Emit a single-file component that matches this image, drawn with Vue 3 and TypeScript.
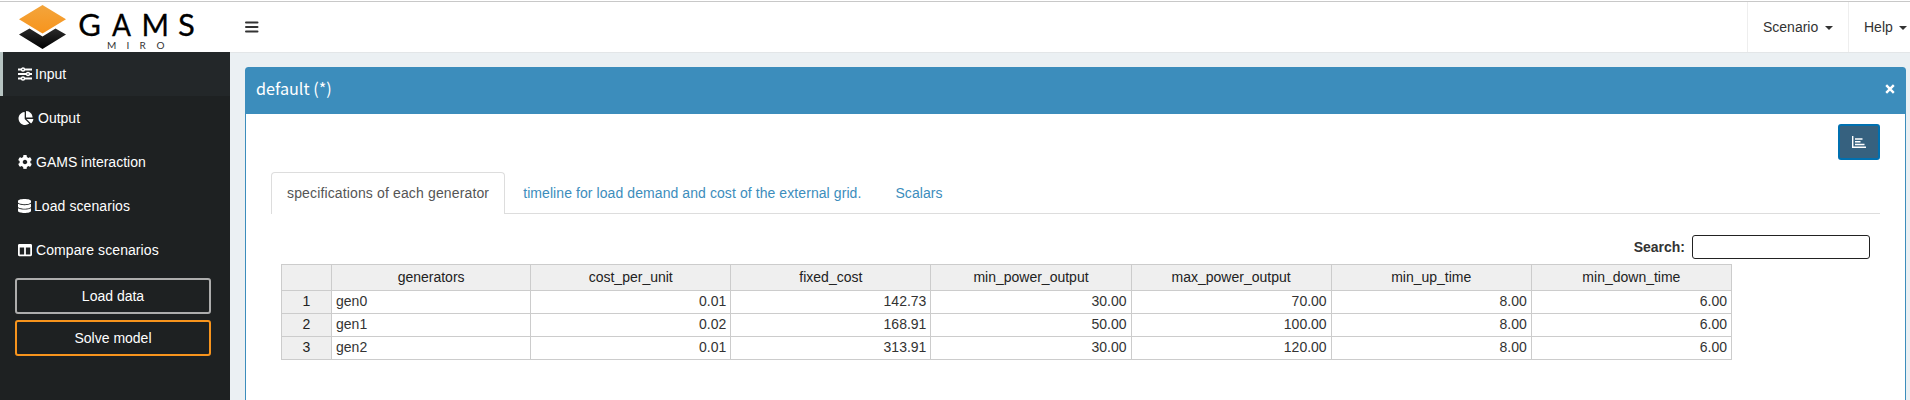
<script setup lang="ts">
interface Row {
  name: string
  values: string[]
}

const menu: { icon: string; label: string; active?: boolean }[] = [
  { icon: 'sliders', label: 'Input', active: true },
  { icon: 'pie', label: 'Output' },
  { icon: 'cog', label: 'GAMS interaction' },
  { icon: 'database', label: 'Load scenarios' },
  { icon: 'columns', label: 'Compare scenarios' },
]

const tabs = [
  'specifications of each generator',
  'timeline for load demand and cost of the external grid.',
  'Scalars',
]

const columns = [
  'generators',
  'cost_per_unit',
  'fixed_cost',
  'min_power_output',
  'max_power_output',
  'min_up_time',
  'min_down_time',
]

const rows: Row[] = [
  { name: 'gen0', values: ['0.01', '142.73', '30.00', '70.00', '8.00', '6.00'] },
  { name: 'gen1', values: ['0.02', '168.91', '50.00', '100.00', '8.00', '6.00'] },
  { name: 'gen2', values: ['0.01', '313.91', '30.00', '120.00', '8.00', '6.00'] },
]
</script>

<template>
  <div class="app">
    <header class="topbar">
      <div class="brand">
        <svg width="230" height="50" viewBox="0 2 230 50">
          <defs>
            <linearGradient id="top" x1="0" y1="0" x2="0" y2="1">
              <stop offset="0" stop-color="#f3a53c" />
              <stop offset="1" stop-color="#f7941d" />
            </linearGradient>
            <linearGradient id="base" x1="0" y1="0" x2="0" y2="1">
              <stop offset="0" stop-color="#2b2b2b" />
              <stop offset="1" stop-color="#000" />
            </linearGradient>
          </defs>
          <path d="M42.500 5 66 19.300 42.500 33.500 19 19.300Z" fill="url(#top)" />
          <path d="M29.500 28.500 42.500 36.500 55.500 28.500 66 34.500 42.500 49 19 34.500Z" fill="url(#base)" />
          <g class="wordmark">
            <text x="78.300" y="36">G</text>
            <text x="112" y="36" textLength="19" lengthAdjust="spacingAndGlyphs">A</text>
            <text x="141.500" y="36" textLength="27.500" lengthAdjust="spacingAndGlyphs">M</text>
            <text x="178" y="36">S</text>
          </g>
          <g class="submark">
            <text x="107" y="49">M</text>
            <text x="126.500" y="49">I</text>
            <text x="139.500" y="49">R</text>
            <text x="156.500" y="49">O</text>
          </g>
        </svg>
      </div>
      <button class="toggle" aria-label="Toggle navigation">
        <svg width="14" height="12" viewBox="0 0 14 12">
          <path d="M1 1.500H12.500M1 6H12.500M1 10.500H12.500" stroke="#333" stroke-width="2" stroke-linecap="round" />
        </svg>
      </button>
      <nav class="menus">
        <a class="menu scenario">Scenario<i class="caret"></i></a>
        <a class="menu help">Help<i class="caret"></i></a>
      </nav>
    </header>

    <div class="main">
      <aside class="sidebar">
        <a v-for="m in menu" :key="m.label" class="item" :class="[m.icon, { active: m.active }]">
          <svg v-if="m.icon === 'sliders'" width="14" height="14" viewBox="0 0 14 14">
            <path d="M0 2.500H14M0 7H14M0 11.500H14" stroke="#fff" stroke-width="1.900" />
            <g fill="#222d32" stroke="#fff" stroke-width="1.400">
              <circle cx="5" cy="2.500" r="1.500" />
              <circle cx="10" cy="7" r="1.500" />
              <circle cx="5" cy="11.500" r="1.500" />
            </g>
          </svg>
          <svg v-else-if="m.icon === 'pie'" width="16" height="14" viewBox="0 0 544 512">
            <path fill="#fff" d="M527.790 288H290.500l158.030 158.030c6.040 6.040 15.980 6.530 22.190.68 38.700-36.460 65.320-85.610 73.130-140.860 1.340-9.460-6.510-17.850-16.060-17.850zm-15.830-64.800C503.720 103.740 408.260 8.280 288.800.04 279.680-.59 272 7.100 272 16.240V240h223.770c9.140 0 16.820-7.680 16.190-16.800zM224 288V50.710c0-9.550-8.390-17.400-17.840-16.060C86.990 51.490-4.100 155.600.140 280.370 4.500 408.510 114.830 513.590 243.030 511.980c50.400-.63 96.970-16.870 135.260-44.030 7.900-5.600 8.420-17.230 1.570-24.080L224 288z" />
          </svg>
          <svg v-else-if="m.icon === 'cog'" width="14" height="14" viewBox="8 8 496 496">
            <path fill="#fff" d="M487.400 315.700l-42.600-24.600c4.300-23.200 4.300-47 0-70.200l42.600-24.600c4.900-2.800 7.100-8.600 5.500-14-11.100-35.600-30-67.800-54.700-94.600-3.800-4.100-10-5.100-14.800-2.300L380.800 110c-17.900-15.400-38.500-27.300-60.800-35.100V25.800c0-5.600-3.900-10.500-9.400-11.700-36.700-8.200-74.300-7.800-109.200 0-5.500 1.200-9.400 6.100-9.400 11.700V75c-22.200 7.900-42.800 19.800-60.800 35.100L88.700 85.500c-4.900-2.800-11-1.900-14.800 2.300-24.700 26.700-43.600 58.900-54.700 94.600-1.700 5.400.6 11.200 5.500 14L67.300 221c-4.300 23.200-4.300 47 0 70.200l-42.600 24.600c-4.900 2.800-7.100 8.600-5.500 14 11.100 35.600 30 67.800 54.700 94.600 3.800 4.100 10 5.100 14.800 2.300l42.600-24.600c17.900 15.400 38.500 27.300 60.800 35.100v49.200c0 5.600 3.900 10.500 9.400 11.700 36.700 8.200 74.300 7.800 109.200 0 5.500-1.200 9.400-6.100 9.400-11.700v-49.200c22.200-7.900 42.800-19.800 60.800-35.100l42.600 24.600c4.900 2.800 11 1.900 14.800-2.300 24.700-26.700 43.600-58.900 54.700-94.600 1.500-5.500-.7-11.300-5.600-14.100zM256 336c-44.100 0-80-35.900-80-80s35.900-80 80-80 80 35.900 80 80-35.900 80-80 80z" />
          </svg>
          <svg v-else-if="m.icon === 'database'" width="13" height="14" viewBox="0 0 448 512" preserveAspectRatio="none">
            <path fill="#fff" d="M448 73.143v45.714C448 159.143 347.667 192 224 192S0 159.143 0 118.857V73.143C0 32.857 100.333 0 224 0s224 32.857 224 73.143zM448 176v102.857C448 319.143 347.667 352 224 352S0 319.143 0 278.857V176c48.125 33.143 136.208 48.572 224 48.572S399.874 209.143 448 176zm0 160v102.857C448 479.143 347.667 512 224 512S0 479.143 0 438.857V336c48.125 33.143 136.208 48.572 224 48.572S399.874 369.143 448 336z" />
          </svg>
          <svg v-else width="14" height="14" viewBox="0 0 512 512">
            <path fill="#fff" d="M464 32H48C21.490 32 0 53.490 0 80v352c0 26.510 21.490 48 48 48h416c26.510 0 48-21.490 48-48V80c0-26.510-21.490-48-48-48zM224 416H64V160h160v256zm224 0H288V160h160v256z" />
          </svg>
          <span>{{ m.label }}</span>
        </a>
        <button class="action">Load data</button>
        <button class="action solve">Solve model</button>
      </aside>

      <main class="content">
        <section class="panel">
          <div class="panel-head">
            <h1>default (*)</h1>
            <svg width="10" height="10" viewBox="0 0 10 10">
              <path d="M1.200 1.200 8.800 8.800M8.800 1.200 1.200 8.800" stroke="#fff" stroke-width="2.400" />
            </svg>
          </div>
          <div class="panel-body">
            <div class="tools">
              <button class="chart" aria-label="Chart">
                <svg width="14" height="12" viewBox="0 0 14 12">
                  <path d="M0.700 0V11.300H14" fill="none" stroke="#fff" stroke-width="1.400" />
                  <path d="M3 3H10.500M3 5.800H8.500M3 8.600H12.500" stroke="#fff" stroke-width="1.500" />
                </svg>
              </button>
            </div>
            <div class="tabs">
              <a v-for="(t, i) in tabs" :key="t" class="tab" :class="{ active: i === 0 }">{{ t }}</a>
            </div>
            <div class="search">
              <label for="q">Search:</label>
              <input id="q" type="text" />
            </div>
            <table class="grid">
              <colgroup>
                <col class="c-index" />
                <col class="c-name" />
                <col v-for="n in 6" :key="n" class="c-value" />
              </colgroup>
              <thead>
                <tr>
                  <th></th>
                  <th v-for="c in columns" :key="c">{{ c }}</th>
                </tr>
              </thead>
              <tbody>
                <tr v-for="(r, i) in rows" :key="r.name">
                  <th>{{ i + 1 }}</th>
                  <td>{{ r.name }}</td>
                  <td v-for="(v, j) in r.values" :key="j" class="num">{{ v }}</td>
                </tr>
              </tbody>
            </table>
          </div>
        </section>
      </main>
    </div>
  </div>
</template>

<style>
body {
  margin: 0;
  overflow: hidden;
}
</style>

<style scoped>
* {
  box-sizing: border-box;
}
.app {
  height: 400px;
  overflow: hidden;
  display: flex;
  flex-direction: column;
  background: #fff;
  color: #333;
  font: 14px/20px 'Liberation Sans', Arial, sans-serif;
}
.topbar {
  display: flex;
  flex: none;
  margin-top: 1px;
  height: 51px;
  border-top: 1px solid #c8c8c8;
}
.brand {
  width: 230px;
}
.brand svg {
  display: block;
}
.wordmark {
  font: 400 31px Lato, sans-serif;
  fill: #000;
  stroke: #000;
  stroke-width: 0.3px;
}
.submark {
  font: 400 10px Lato, sans-serif;
  fill: #333;
}
button {
  font: inherit;
  padding: 0;
}
.toggle {
  border: 0;
  background: none;
  width: 44px;
  display: flex;
  align-items: center;
  padding-left: 15px;
}
.menus {
  margin-left: auto;
  display: flex;
}
.menu {
  border-left: 1px solid #eee;
  padding: 15px 0 0 15px;
  display: flex;
}
.scenario {
  width: 101px;
}
.help {
  width: 62px;
}
.caret {
  border: 4px solid transparent;
  border-top-color: #333;
  border-bottom: 0;
  height: 4px;
  margin: 9px 0 0 7px;
}
.help .caret {
  margin-left: 6px;
}
.main {
  display: flex;
  flex: 1;
  min-height: 0;
}
.sidebar {
  width: 230px;
  background: #1e2122;
  display: flex;
  flex-direction: column;
}
.item {
  height: 44px;
  flex: none;
  display: flex;
  align-items: center;
  gap: 4px;
  padding-left: 15px;
  border-left: 3px solid transparent;
  color: #fff;
}
.item.sliders,
.item.database {
  gap: 3px;
}
.item.database,
.item.columns {
  letter-spacing: 0.080px;
}
.item.active {
  background: #232729;
  border-left-color: #b7c4c2;
}
.action {
  flex: none;
  width: 196px;
  height: 36px;
  margin: 6px 0 0 15px;
  border: 2px solid #adadad;
  border-radius: 3px;
  background: transparent;
  color: #fff;
}
.solve {
  border-color: #f7941d;
}
.content {
  flex: 1;
  background: #ebf0f3;
  padding: 14px 4px 0 15px;
  border-top: 1px solid #e3e6e8;
}
.panel {
  height: 360px;
  border: 1px solid #3c8dbc;
  border-radius: 3px;
  background: #fff;
}
.panel-head {
  height: 46px;
  background: #3c8dbc;
  display: flex;
  align-items: center;
  justify-content: space-between;
  padding: 0 10px;
}
h1 {
  margin: 0 0 7px;
  color: #fff;
  font: 400 16.200px/20px 'Noto Sans CJK SC', 'Noto Sans', sans-serif;
}
.panel-head svg {
  margin-bottom: 4px;
}
.panel-body {
  padding: 10px 25px 0;
}
.tools {
  display: flex;
  justify-content: flex-end;
}
.chart {
  width: 42px;
  height: 36px;
  border: 2px solid #0070b0;
  border-radius: 3px;
  background: #36617f;
  display: flex;
  align-items: center;
  justify-content: center;
}
.tabs {
  display: flex;
  gap: 2px;
  margin-top: 12px;
  border-bottom: 1px solid #ddd;
}
.tab {
  height: 42px;
  padding: 10px 15px;
  margin-bottom: -1px;
  border: 1px solid transparent;
  border-bottom: 0;
  border-radius: 4px 4px 0 0;
  color: #3c8dbc;
  letter-spacing: 0.080px;
}
.tab.active {
  color: #555;
  border-color: #ddd;
  background: #fff;
  letter-spacing: 0.140px;
}
.search {
  display: flex;
  justify-content: flex-end;
  gap: 7px;
  height: 29px;
  margin: 21px 10px 0;
  line-height: 24px;
  font-weight: 700;
}
.search input {
  width: 178px;
  height: 24px;
  border: 1px solid #222;
  border-radius: 3px;
  padding: 0;
}
.grid {
  table-layout: fixed;
  width: 1451px;
  margin-left: 10px;
  border-collapse: collapse;
}
.c-index {
  width: 50px;
}
.c-name {
  width: 199px;
}
.c-value {
  width: 200px;
}
th,
td {
  border: 1px solid #ccc;
  padding: 0 4px 2px;
  height: 23px;
  line-height: 20px;
}
th {
  background: #efefef;
  font-weight: 400;
  color: #222;
  text-align: center;
}
thead th {
  height: 26px;
  padding-bottom: 1px;
  line-height: 24px;
}
.num {
  text-align: right;
}
</style>
